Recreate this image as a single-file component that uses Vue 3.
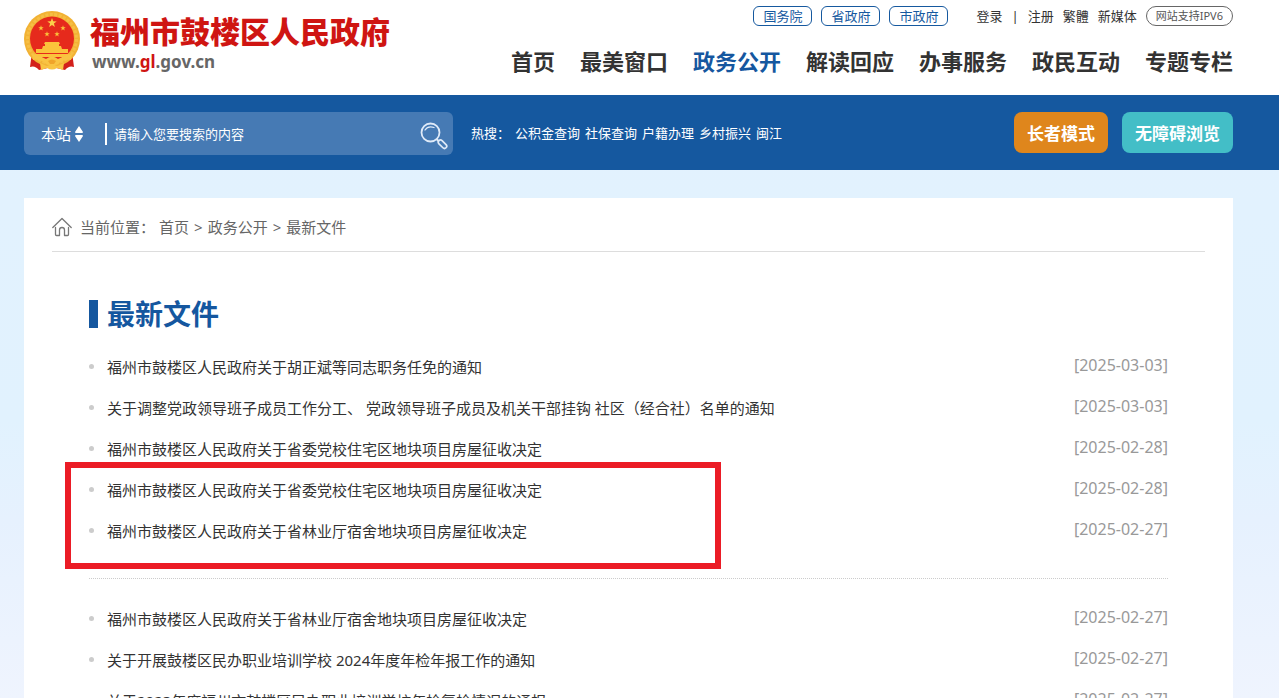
<template>
  <div class="page">
    <!-- 头部 -->
    <header class="header">
      <a class="logo" href="#">
        <svg class="emblem" viewBox="0 0 56 60" aria-hidden="true">
          <path d="M8 41 L6 56 Q11 54 15 59 L28 56 L41 59 Q45 54 50 56 L48 41 Z" fill="#d3201b" />
          <circle cx="28" cy="28" r="28" fill="#f2b234" />
          <circle cx="28" cy="28" r="24.5" fill="none" stroke="#f6bf45" stroke-width="3" stroke-dasharray="3 1.5" />
          <circle cx="28" cy="27.5" r="22" fill="#e62a1c" />
          <path d="M28 7 L29.2 10.3 L32.7 10.4 L29.9 12.5 L30.9 15.900 L28 13.9 L25.1 15.9 L26.1 12.5 L23.3 10.4 L26.800 10.3 Z" fill="#fbd04a" />
          <path v-for="(s, i) in stars" :key="i" :transform="`translate(${s.x} ${s.y})`" d="M0 -2.8 L.7 -.8 L2.7 -.8 L1.1 .5 L1.7 2.5 L0 1.3 L-1.7 2.5 L-1.1 .5 L-2.7 -.8 L-.7 -.8 Z" fill="#fbc33b" />
          <path d="M21 31 H35 L36 33 H20 Z M21 33 H35 V35 H21 Z M19 35 H37 L38 38 H18 Z M12 38 H44 V42 H12 Z M10 43 H46 L43 46 H13 Z" fill="#fbc33b" />
          <path d="M8 43 Q15 44 22 48 Q28 43 34 48 Q41 44 48 43 L47 49 Q39 48 34 53 L28 55 L22 53 Q17 48 9 49 Z" fill="#f9c443" />
          <path d="M24 50 Q28 47 32 50 L30 53 H26 Z" fill="#f0a42a" />
          <path d="M16 52 L23 55 Q28 52 33 55 L40 52 L39 59 L33 57 Q28 60 23 57 L17 59 Z" fill="#f9c443" />
        </svg>
        <span class="logo-text">
          <strong>福州市鼓楼区人民政府</strong>
          <span class="domain">www.<em>gl</em>.gov.cn</span>
        </span>
      </a>

      <div class="header-right">
        <div class="top-links">
          <a v-for="item in govLinks" :key="item" class="gov-link" href="#">{{ item }}</a>
          <div class="user-links">
            <a href="#">登录</a>
            <span>|</span>
            <a href="#">注册</a>
            <a href="#">繁體</a>
            <a href="#">新媒体</a>
            <a class="ipv6" href="#">网站支持IPV6</a>
          </div>
        </div>
        <nav class="nav">
          <a
            v-for="item in navList"
            :key="item"
            href="#"
            :class="{ active: item === activeNav }"
            @click.prevent="activeNav = item"
          >{{ item }}</a>
        </nav>
      </div>
    </header>

    <!-- 搜索栏 -->
    <div class="search-bar">
      <form class="search-box" @submit.prevent>
        <label class="scope">
          <select v-model="scope" aria-label="搜索范围">
            <option>本站</option>
          </select>
          <svg viewBox="0 0 8 16" width="8" height="16" aria-hidden="true">
            <path d="M4 0 L8 6 Q8 7 7 7 H1 Q0 7 0 6 Z M4 16 L8 10 Q8 9 7 9 H1 Q0 9 0 10 Z" fill="#fff" />
          </svg>
        </label>
        <input v-model="keyword" type="text" placeholder="请输入您要搜索的内容" aria-label="搜索内容" />
        <button class="search-btn" type="submit" aria-label="搜索">
          <svg viewBox="0 0 28 28" width="28" height="28" fill="none" stroke="#dfeaf8" aria-hidden="true">
            <circle cx="10.5" cy="10.5" r="9" stroke-width="1.8" />
            <path d="M5 8 Q8 3.5 14 5.5" stroke-width="1.3" stroke-linecap="round" />
            <path d="M16.5 17 L18.5 19" stroke-width="2" />
            <rect x="17.5" y="20" width="10" height="4.4" rx="2.2" transform="rotate(45 22.5 22.2)" stroke-width="1.7" />
          </svg>
        </button>
      </form>
      <div class="hot">
        <span class="hot-label">热搜：</span>
        <a v-for="item in hotWords" :key="item" href="#">{{ item }}</a>
      </div>
      <div class="modes">
        <button class="mode elder" type="button">长者模式</button>
        <button class="mode barrier" type="button">无障碍浏览</button>
      </div>
    </div>

    <!-- 内容 -->
    <main class="card">
      <div class="crumbs">
        <svg viewBox="0 0 20 20" width="20" height="20" fill="none" stroke="#777" stroke-width="1.3" stroke-linejoin="round" stroke-linecap="round" aria-hidden="true">
          <path d="M.8 10.5 L10 1.5 L19.2 10.5" />
          <path d="M3.5 10.5 V17.5 Q3.5 18.5 4.5 18.5 H7.5 V13 Q7.5 10.5 10 10.500 Q12.5 10.5 12.5 13 V18.5 H15.5 Q16.5 18.5 16.5 17.5 V10.5" />
        </svg>
        <span class="crumbs-label">当前位置：</span>
        <a href="#">首页</a>
        <span class="sep">&gt;</span>
        <a href="#">政务公开</a>
        <span class="sep">&gt;</span>
        <a href="#">最新文件</a>
      </div>

      <section class="docs">
        <h1>最新文件</h1>
        <div v-for="(group, gi) in groups" :key="gi" class="group">
          <ul>
            <li v-for="(doc, i) in group" :key="i">
              <a href="#">{{ doc.title }}</a>
              <time>[{{ doc.date }}]</time>
            </li>
          </ul>
          <div v-if="gi === 0" class="mark"></div>
        </div>
      </section>
    </main>
  </div>
</template>

<script setup>
import { ref } from 'vue';

// 国徽上的小星
const stars = [
  { x: 17, y: 17 },
  { x: 39, y: 17 },
  { x: 23, y: 23 },
  { x: 33, y: 23 },
];

const govLinks = ['国务院', '省政府', '市政府'];
const navList = ['首页', '最美窗口', '政务公开', '解读回应', '办事服务', '政民互动', '专题专栏'];
const hotWords = ['公积金查询', '社保查询', '户籍办理', '乡村振兴', '闽江'];

// 当前栏目
const activeNav = ref('政务公开');
// 搜索条件
const scope = ref('本站');
const keyword = ref('');

// 文件列表，每组之间用虚线隔开
const groups = [
  [
    { title: '福州市鼓楼区人民政府关于胡正斌等同志职务任免的通知', date: '2025-03-03' },
    { title: '关于调整党政领导班子成员工作分工、 党政领导班子成员及机关干部挂钩 社区（经合社）名单的通知', date: '2025-03-03' },
    { title: '福州市鼓楼区人民政府关于省委党校住宅区地块项目房屋征收决定', date: '2025-02-28' },
    { title: '福州市鼓楼区人民政府关于省委党校住宅区地块项目房屋征收决定', date: '2025-02-28' },
    { title: '福州市鼓楼区人民政府关于省林业厅宿舍地块项目房屋征收决定', date: '2025-02-27' },
  ],
  [
    { title: '福州市鼓楼区人民政府关于省林业厅宿舍地块项目房屋征收决定', date: '2025-02-27' },
    { title: '关于开展鼓楼区民办职业培训学校 2024年度年检年报工作的通知', date: '2025-02-27' },
    { title: '关于2023年度福州市鼓楼区民办职业培训学校年检复检情况的通报', date: '2025-02-27' },
  ],
];
</script>

<style>
body {
  margin: 0;
  background: #eef4fe;
}
</style>

<style scoped>
.page {
  min-height: 100vh;
  background: linear-gradient(#e3f2fe 0, #e1f2fe 420px, #e6f1fe 520px, #eff4fe 700px);
  font-family: "Noto Sans", "Noto Sans CJK SC", sans-serif;
  font-size: 13px;
  line-height: 20px;
  color: #333;
}

a {
  color: inherit;
  text-decoration: none;
}

button,
input,
select {
  border: none;
  padding: 0;
  font-family: inherit;
  color: #fff;
}

/* 头部 */
.header {
  display: flex;
  justify-content: space-between;
  box-sizing: border-box;
  min-height: 95px;
  padding: 6px 46px 0 24px;
  background: #fff;
}

.logo {
  display: flex;
  gap: 10px;
  padding-top: 5px;
}

.emblem {
  width: 56px;
  height: 60px;
}

.logo-text {
  display: flex;
  flex-direction: column;
}

.logo-text strong {
  font-size: 30px;
  font-weight: 900;
  line-height: 41px;
  color: #cf1512;
}

.domain {
  padding-left: 2px;
  font-size: 17px;
  font-weight: 700;
  color: #666;
}

.domain em {
  font-style: normal;
  color: #cf1512;
}

.header-right {
  display: flex;
  flex-direction: column;
  align-items: flex-end;
}

.top-links,
.user-links {
  display: flex;
  align-items: center;
  gap: 9px;
}

.user-links {
  margin-left: 19px;
}

.gov-link {
  padding: 0 9px;
  border: 1px solid #16599f;
  border-radius: 6px;
  line-height: 18px;
  color: #16599f;
}

.ipv6 {
  padding: 0 9px;
  border: 1px solid #666;
  border-radius: 10px;
  font-size: 11px;
  line-height: 18px;
  color: #555;
}

.nav {
  display: flex;
  gap: 25px;
  margin-top: 19px;
  font-size: 22px;
  font-weight: 700;
  line-height: 32px;
  white-space: nowrap;
}

.nav .active {
  color: #15579f;
}

/* 搜索栏 */
.search-bar {
  display: flex;
  align-items: flex-start;
  padding: 17px 46px 15px 24px;
  background: #15589f;
  color: #fff;
}

.search-box {
  display: flex;
  align-items: center;
  flex: 0 1 429px;
  box-sizing: border-box;
  height: 43px;
  padding: 0 5px 0 17px;
  border-radius: 6px;
  background: #467ab4;
}

.scope {
  display: flex;
  align-items: center;
  gap: 3px;
  width: 64px;
}

.scope select {
  appearance: none;
  width: 31px;
  background: transparent;
  font-size: 15px;
  line-height: 24px;
}

.scope option {
  color: #333;
}

.search-box input {
  flex: 1;
  min-width: 0;
  height: 22px;
  padding-left: 7px;
  border-left: 2px solid #fff;
  background: transparent;
  font-size: 13px;
  outline: none;
}

.search-box input::placeholder {
  color: #fff;
  opacity: 1;
}

.search-btn {
  height: 28px;
  margin-top: 4px;
  background: transparent;
  cursor: pointer;
}

.hot {
  display: flex;
  gap: 5px;
  margin-left: 18px;
  line-height: 43px;
}

.modes {
  display: flex;
  gap: 14px;
  margin-left: auto;
}

.mode {
  height: 41px;
  padding: 0 13px;
  border-radius: 8px;
  font-size: 17px;
  font-weight: 700;
  cursor: pointer;
}

.elder {
  background: #df861c;
}

.barrier {
  background: #43bec7;
}

/* 内容 */
.card {
  margin: 28px 46px 0 24px;
  padding: 0 28px;
  background: #fff;
}

.crumbs {
  display: flex;
  align-items: center;
  height: 54px;
  padding-top: 5px;
  box-sizing: border-box;
  border-bottom: 1px solid #ddd;
  font-size: 15px;
  color: #666;
}

.crumbs-label {
  margin: 0 4px 0 8px;
}

.sep {
  margin: 0 5px;
}

.docs {
  padding: 42px 37px 0;
}

h1 {
  display: flex;
  align-items: center;
  gap: 9px;
  margin: 0 0 12px;
  font-size: 28px;
  line-height: 40px;
  color: #15579f;
}

h1::before {
  content: "";
  width: 9px;
  height: 28px;
  background: #15579f;
}

.group {
  position: relative;
}

.group + .group {
  margin-top: 27px;
  padding-top: 19px;
  border-top: 1px dotted #ccc;
}

ul {
  margin: 0;
  padding: 0;
  list-style: none;
}

li {
  display: flex;
  align-items: center;
  height: 41px;
  font-size: 15px;
}

li::before {
  content: "";
  width: 5px;
  height: 5px;
  margin-right: 13px;
  border-radius: 50%;
  background: #ccc;
}

time {
  margin-left: auto;
  padding-bottom: 4px;
  font-size: 16px;
  color: #999;
}

/* 红框标注 */
.mark {
  position: absolute;
  top: 116px;
  left: -24px;
  box-sizing: border-box;
  width: 656px;
  height: 107px;
  border: 6px solid #eb1c26;
  pointer-events: none;
}
</style>
